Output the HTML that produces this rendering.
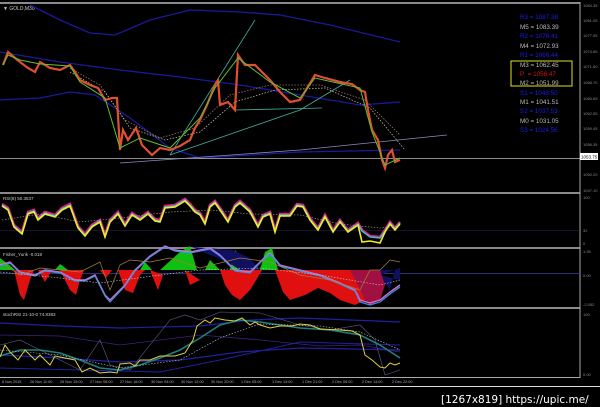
<!DOCTYPE html>
<html><head><style>
html,body{margin:0;padding:0;background:#000;width:600px;height:407px;overflow:hidden;font-family:"Liberation Sans",sans-serif}
</style></head><body>
<svg width="600" height="407" viewBox="0 0 600 407" xmlns="http://www.w3.org/2000/svg" font-family="Liberation Sans, sans-serif">
<rect width="600" height="407" fill="#000"/>
<g fill="#8a8a8a">
<rect x="0" y="2" width="580" height="2"/>
<rect x="0" y="192" width="580" height="2"/>
<rect x="0" y="247" width="580" height="2"/>
<rect x="0" y="307" width="580" height="2"/>
</g>
<line x1="580" y1="2" x2="580" y2="378" stroke="#aaa" stroke-width="1"/>
<line x1="0" y1="377.5" x2="580" y2="377.5" stroke="#aaa"/>
<line x1="0" y1="386.5" x2="600" y2="386.5" stroke="#ddd"/>
<text x="3" y="10" fill="#ccc" font-size="5">▼ GOLD,M30</text>
<polyline fill="none" stroke="#1a1a9a" stroke-width="1.3" points="30,5 60,20 90,33 115,35 150,20 190,10 240,12 280,15 330,25 400,42"/>
<polyline fill="none" stroke="#1a1a9a" stroke-width="1.3" points="0,52 60,62 120,70 180,77 240,85 300,95 360,105 400,102"/>
<polyline fill="none" stroke="#1a1a9a" stroke-width="1.3" points="0,100 40,98 70,92 95,95 130,118 170,148 200,158 300,152 400,150"/>
<line x1="0" y1="158.5" x2="580" y2="158.5" stroke="#bbb" stroke-width="0.8"/>
<polyline fill="none" stroke="#8a8ac0" stroke-width="0.8" points="120,163 300,150 447,135"/>
<polyline fill="none" stroke="#40b0a0" stroke-width="0.8" points="170,155 255,20"/>
<polyline fill="none" stroke="#40b0a0" stroke-width="0.8" points="170,155 300,110 350,80"/>
<polyline fill="none" stroke="#40b0a0" stroke-width="0.8" points="235,110 322,108"/>
<polyline fill="none" stroke="#a07070" stroke-dasharray="1.5,1.5" stroke-width="0.8" points="70,68 100,85 125,120 160,138 195,128 230,95 270,85 320,85 365,100 400,135"/>
<polyline fill="none" stroke="#d0d0a0" stroke-dasharray="1.5,1.5" stroke-width="0.7" points="70,72 105,92 130,128 165,140 200,132 235,102 275,90 325,88 370,108 405,150"/>
<polyline fill="none" stroke="#e05030" stroke-width="2.2" points="3,65 8,52 15,58 20,62 28,68 35,72 40,62 50,68 60,70 70,65 75,72 80,80 90,85 98,88 105,100 112,98 117,98 120,150 123,130 128,140 136,128 142,145 152,155 160,148 170,150 180,146 190,140 195,128 200,120 207,105 215,85 218,80 220,105 228,102 235,110 238,55 245,65 255,65 262,72 270,80 280,92 290,102 300,100 306,90 315,75 325,78 340,82 352,84 360,90 365,92 368,110 372,130 378,140 382,160 385,168 388,155 392,150 395,162 400,160"/>
<polyline fill="none" stroke="#60c030" stroke-width="1" points="3,65 8,55 20,60 40,64 70,66 80,82 105,98 120,148 140,138 170,148 200,118 215,88 238,58 270,82 300,98 315,78 360,88 372,132 385,165 400,158"/>
<rect x="580" y="153" width="18" height="7" fill="#fff"/>
<text x="581" y="158.5" fill="#000" font-size="4.5">1053.75</text>
<g fill="#888" font-size="4">
<text x="583" y="7">1084.35</text><text x="583" y="22">1081.05</text><text x="583" y="37">1077.95</text><text x="583" y="53">1074.65</text><text x="583" y="68">1071.60</text><text x="583" y="84">1068.70</text><text x="583" y="100">1065.65</text><text x="583" y="115">1062.55</text><text x="583" y="130">1059.45</text><text x="583" y="146">1056.35</text><text x="583" y="176">1050.20</text><text x="583" y="192">1047.10</text>
</g>
<g font-size="6.3">
<text x="520" y="19" fill="#1c1ce8">R3 = 1087.38</text>
<text x="520" y="29" fill="#bbb">M5 = 1083.39</text>
<text x="520" y="38" fill="#1c1ce8">R2 = 1076.41</text>
<text x="520" y="48" fill="#bbb">M4 = 1072.93</text>
<text x="520" y="57" fill="#1c1ce8">R1 = 1066.44</text>
<text x="520" y="67" fill="#bbb">M3 = 1062.45</text>
<text x="520" y="76" fill="#e01010">P&#160;&#160;= 1058.47</text>
<text x="520" y="85" fill="#bbb">M2 = 1051.99</text>
<text x="520" y="95" fill="#1c1ce8">S1 = 1048.50</text>
<text x="520" y="104" fill="#bbb">M1 = 1041.51</text>
<text x="520" y="113" fill="#1c1ce8">S2 = 1037.53</text>
<text x="520" y="123" fill="#bbb">M0 = 1031.05</text>
<text x="520" y="132" fill="#1c1ce8">S3 = 1024.56</text>
</g>
<rect x="511" y="61" width="61" height="25" fill="none" stroke="#e0e020" stroke-width="1"/>
<text x="3" y="200" fill="#ccc" font-size="4.5">RSI(8) 50.3537</text>
<line x1="0" y1="230.5" x2="580" y2="230.5" stroke="#402060" stroke-width="0.6"/>
<polyline fill="none" stroke="#e02080" stroke-width="2.6" points="2,204 8,208 14,225 22,232 28,212 34,210 38,218 45,212 55,215 62,208 70,204 78,226 85,234 92,225 100,220 105,235 110,220 118,212 125,224 132,213 140,218 148,212 155,219 160,220 165,206 175,205 185,199 190,204 195,210 200,213 205,222 210,205 215,201 220,208 228,220 235,205 240,201 250,210 258,225 263,215 270,212 275,230 280,214 290,214 297,204 303,205 310,218 318,228 325,215 333,230 340,220 348,230 358,223 362,230 370,236 380,237 385,230 390,222 395,228 400,222"/>
<polyline fill="none" stroke="#40c0e0" stroke-width="1.4" points="2,205 8,209 14,226 22,233 28,213 34,211 38,219 45,213 55,216 62,209 70,205 78,227 85,235 92,226 100,221 105,236 110,221 118,213 125,225 132,214 140,219 148,213 155,220 160,221 165,207 175,206 185,200 190,205 195,211 200,214 205,223 210,206 215,202 220,209 228,221 235,206 240,202 250,211 258,226 263,216 270,213 275,231 280,215 290,215 297,205 303,206 310,219 318,229 325,216 333,231 340,221 348,231 358,224 362,231 370,237 380,238 385,231 390,223 395,229 400,223"/>
<polyline fill="none" stroke="#f0f020" stroke-width="1.6" points="2,206 8,210 14,227 22,234 28,214 34,212 38,220 45,214 55,217 62,210 70,206 78,228 85,236 92,227 100,222 105,237 110,222 118,214 125,226 132,215 140,220 148,214 155,221 160,222 165,208 175,207 185,201 190,206 195,212 200,215 205,224 210,207 215,203 220,210 228,222 235,207 240,203 250,212 258,227 263,217 270,214 275,232 280,216 290,216 297,206 303,207 310,220 318,230 325,217 333,232 340,222 348,232 358,225 362,242 370,241 380,243 385,232 390,224 395,230 400,224"/>
<polyline fill="none" stroke="#aaa" stroke-dasharray="1.5,1.5" stroke-width="0.6" points="2,220 40,214 80,222 120,218 170,212 210,210 250,214 300,215 340,224 380,228 400,226"/>
<g fill="#888" font-size="4"><text x="583" y="199">100</text><text x="583" y="232">32</text><text x="583" y="245">0</text></g>
<text x="3" y="256" fill="#ccc" font-size="4.5">Fisher_Yurik -0.018</text>
<line x1="0" y1="273.5" x2="580" y2="273.5" stroke="#4040a0" stroke-width="0.8"/>
<path fill="#10c010" d="M0,270 L0,258 L8,264 L15,270 Z M55,270 L60,264 L68,270 Z M140,270 L145,262 L152,270 Z M160,270 L180,252 L190,246 L197,270 Z M205,270 L210,260 L220,270 Z M230,270 L235,250 L240,256 L247,270 Z M260,270 L265,252 L272,248 L278,270 Z"/>
<path fill="#101060" d="M192,247 L210,255 L228,262 L240,270 L260,270 L250,258 L232,250 Z M210,250 L230,262 L245,262 Z M375,270 L390,290 L395,270 Z M380,275 L400,268 L400,280 Z"/>
<path fill="#e01010" d="M14,270 L20,295 L24,300 L30,280 L34,270 Z M38,270 L45,282 L52,270 Z M60,270 L70,290 L76,295 L80,280 L84,270 Z M100,270 L106,278 L112,270 Z M118,270 L125,290 L133,293 L140,275 L145,270 Z M150,270 L158,290 L163,275 Z M185,270 L190,285 L200,280 Z M220,270 L225,285 L232,295 L240,300 L250,290 L255,282 L262,270 Z M275,270 L283,292 L290,300 L305,295 L318,288 L330,293 L340,300 L355,305 L365,300 L370,285 L372,270 Z"/>
<path fill="#a01040" d="M350,270 L365,300 L370,305 L380,300 L385,285 L380,270 Z"/>
<polyline fill="none" stroke="#d070d0" stroke-width="1.4" points="0,265 10,262 20,272 35,275 45,270 60,272 75,280 85,280 95,275 105,295 110,300 125,285 135,270 150,256 165,246 175,250 190,252 210,248 220,255 235,270 250,272 262,260 270,253 280,265 300,270 320,275 340,283 355,290 360,300 370,303 380,300 390,292 400,285"/>
<polyline fill="none" stroke="#4090e0" stroke-width="1.2" points="0,266 10,263 20,273 35,276 45,271 60,273 75,281 85,281 95,276 105,296 110,302 125,286 135,271 150,257 165,247 175,251 190,253 210,249 220,256 235,271 250,273 262,261 270,254 280,266 300,271 320,276 340,284 355,291 360,302 370,305 380,302 390,294 400,287"/>
<polyline fill="none" stroke="#a08040" stroke-width="0.7" points="0,262 20,275 40,268 80,272 100,262 110,290 120,265 130,260 150,262 170,258 200,268 240,258 270,262 300,275 330,280 360,290 370,270 380,270 390,260 400,262"/>
<polyline fill="none" stroke="#ccc" stroke-dasharray="1.5,1.5" stroke-width="0.6" points="0,272 60,278 100,283 160,275 200,270 260,268 320,275 380,285 400,280"/>
<g fill="#888" font-size="4"><text x="583" y="253">1.95</text><text x="583" y="277">0.00</text><text x="583" y="306">-2.052</text></g>
<text x="3" y="316" fill="#ccc" font-size="4.5">stochRSI 21-10-0 74.8383</text>
<polyline fill="none" stroke="#2020a0" stroke-width="1.2" points="0,323 60,326 120,328 200,326 250,320 300,318 400,322"/>
<polyline fill="none" stroke="#2020a0" stroke-width="1.2" points="0,355 60,358 120,362 180,360 240,352 300,348 400,350"/>
<polyline fill="none" stroke="#2020a0" stroke-width="1" points="0,368 80,370 160,372 220,360 300,342 400,345"/>
<polyline fill="none" stroke="#402080" stroke-width="0.8" points="0,335 60,336 120,345 200,335 260,340 320,346 360,345 400,352"/>
<polyline fill="none" stroke="#208080" stroke-width="1.6" points="0,356 20,350 40,350 60,353 80,360 100,368 120,370 140,365 160,358 180,350 200,338 220,325 240,320 260,322 280,325 300,328 330,330 360,335 380,345 400,358"/>
<polyline fill="none" stroke="#606090" stroke-width="0.6" points="0,345 20,340 60,360 80,370 100,340 110,365 130,370 150,345 170,320 185,315 200,320 220,312 260,313 300,325 330,330 360,325 375,340 385,375 400,370"/>
<polyline fill="none" stroke="#e0d040" stroke-width="1" points="0,357 5,345 10,352 18,360 25,350 35,360 40,355 50,365 55,356 65,358 75,360 82,372 90,368 100,373 110,372 117,373 120,364 130,363 135,366 140,360 150,360 160,356 175,356 185,353 193,340 197,326 205,320 210,323 215,318 225,320 235,321 242,318 250,325 255,322 260,325 270,328 280,326 292,326 300,324 310,325 320,329 340,330 352,331 360,335 365,355 372,360 380,367 385,368 390,363 395,365 400,363"/>
<polyline fill="none" stroke="#ccc" stroke-dasharray="1.5,1.5" stroke-width="0.6" points="0,350 60,355 120,368 180,360 220,338 260,324 320,326 360,332 400,350"/>
<g fill="#888" font-size="4"><text x="583" y="316">100</text><text x="583" y="376">0.00</text></g>
<g fill="#aaa" font-size="3.8">
<text x="2" y="383">6 Nov 2015</text><text x="30" y="383">26 Nov 11:00</text><text x="60" y="383">26 Nov 19:00</text><text x="90" y="383">27 Nov 08:00</text><text x="120" y="383">27 Nov 16:00</text><text x="151" y="383">30 Nov 04:00</text><text x="181" y="383">30 Nov 12:00</text><text x="211" y="383">30 Nov 20:00</text><text x="241" y="383">1 Dec 05:00</text><text x="272" y="383">1 Dec 13:00</text><text x="302" y="383">1 Dec 21:00</text><text x="332" y="383">2 Dec 06:00</text><text x="362" y="383">2 Dec 14:00</text><text x="392" y="383">2 Dec 22:00</text>
</g>
<text x="441" y="403" fill="#fff" font-size="10.5" font-family="DejaVu Sans, sans-serif">[1267x819] https://upic.me/</text>
</svg>
</body></html>
